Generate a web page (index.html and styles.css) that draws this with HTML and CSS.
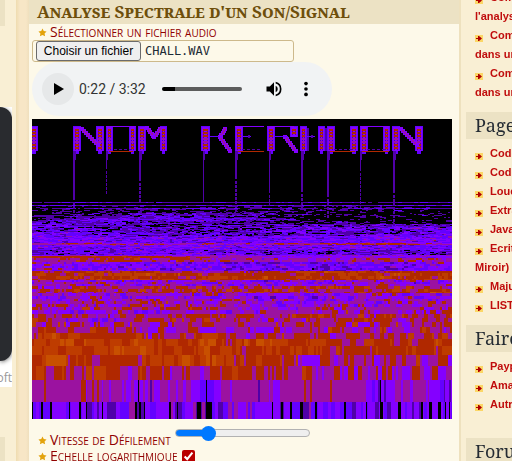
FILE: index.html
```html
<!DOCTYPE html>
<html lang="fr">
<head>
<meta charset="utf-8">
<title>Analyse Spectrale d'un Son/Signal</title>
<link rel="stylesheet" href="styles.css">
</head>
<body>
<svg class="defs" aria-hidden="true">
  <symbol id="star" viewBox="0 0 10 10"><path d="M5 .6 6.4 3.4 9.5 3.8 7.3 6 7.9 9.2 5 7.8 2.1 9.2 2.7 6 .5 3.8 3.6 3.4Z"/></symbol>
  <symbol id="plus" viewBox="0 0 8 7"><path fill="#fbd666" d="M0 0h8v7H0z"/><path fill="#b00000" d="M1 3h2V1h1l3 2.500L4 6H3V4H1z"/></symbol>
</svg>
<div class="page">
  <div class="left">
    <div class="tab"></div>
    <div class="promo"><div class="promo-art"></div><div class="promo-text"><span>Microsoft</span></div></div>
    <div class="tab"></div>
  </div>
  <div class="gutter"></div>
  <main class="main">
    <h1>Analyse Spectrale d'un Son/Signal</h1>
    <div class="content">
      <div class="label"><svg class="star"><use href="#star"/></svg><span>Sélectionner un fichier audio</span></div>
      <div class="file"><button type="button">Choisir un fichier</button><output>CHALL.WAV</output></div>
      <div class="player">
        <button type="button" class="play" aria-label="Lecture"><svg viewBox="0 0 32 32"><path d="M12 10v12l10-6z"/></svg></button>
        <span class="time">0:22 / 3:32</span>
        <input type="range" class="seek" min="0" max="212" value="34" aria-label="Position">
        <button type="button" class="icon" aria-label="Volume"><svg viewBox="0 0 24 24"><path d="M3 9v6h4l5 5V4L7 9zm13.500 3A4.500 4.500 0 0 0 14 7.970v8.050A4.470 4.470 0 0 0 16.500 12zM14 3.230v2.060a7 7 0 0 1 0 13.420v2.060a9 9 0 0 0 0-17.540z"/></svg></button>
        <button type="button" class="icon" aria-label="Options"><svg viewBox="0 0 24 24"><circle cx="12" cy="5.500" r="2.200"/><circle cx="12" cy="12" r="2.200"/><circle cx="12" cy="18.500" r="2.200"/></svg></button>
      </div>
      <canvas id="spectrum" width="420" height="300"></canvas>
      <div class="speed"><label class="label" for="speed"><svg class="star"><use href="#star"/></svg><span>Vitesse de Défilement</span></label><input id="speed" type="range" min="0" max="100" value="21"></div>
      <div class="scale"><label class="label" for="log"><svg class="star"><use href="#star"/></svg><span>Echelle logarithmique</span></label><input id="log" type="checkbox" checked></div>
    </div>
  </main>
  <aside class="side">
    <ul class="first">
      <li><a href="#"><svg><use href="#plus"/></svg>Comment faire</a></li><li><a href="#">l'analyse</a></li>
      <li><a href="#"><svg><use href="#plus"/></svg>Comment</a></li><li><a href="#">dans une</a></li>
      <li><a href="#"><svg><use href="#plus"/></svg>Comment</a></li><li><a href="#">dans une</a></li>
    </ul>
    <h2>Pages</h2>
    <ul>
      <li><a href="#"><svg><use href="#plus"/></svg>Code</a></li>
      <li><a href="#"><svg><use href="#plus"/></svg>Code</a></li>
      <li><a href="#"><svg><use href="#plus"/></svg>Louer</a></li>
      <li><a href="#"><svg><use href="#plus"/></svg>Extra</a></li>
      <li><a href="#"><svg><use href="#plus"/></svg>Java</a></li>
      <li><a href="#"><svg><use href="#plus"/></svg>Ecriture</a></li>
      <li><a href="#">Miroir)</a></li>
      <li><a href="#"><svg><use href="#plus"/></svg>Majuscule</a></li>
      <li><a href="#"><svg><use href="#plus"/></svg>LISTE</a></li>
    </ul>
    <h2>Faire</h2>
    <ul class="last">
      <li><a href="#"><svg><use href="#plus"/></svg>Paypal</a></li>
      <li><a href="#"><svg><use href="#plus"/></svg>Amazon</a></li>
      <li><a href="#"><svg><use href="#plus"/></svg>Autre</a></li>
    </ul>
    <h2>Forum</h2>
  </aside>
</div>
<script src="spectrum.js"></script>
</body>
</html>
```
FILE: styles.css
```css
* { box-sizing: border-box; }
body { margin: 0; overflow: hidden; background: #f9eed3; font-family: "Open Sans", sans-serif; }
button { font: inherit; padding: 0; cursor: pointer; }
.defs { display: none; }
.page { display: flex; height: 100vh; overflow: hidden; }

.left { flex: 0 0 16px; background: #f9efd4; }
.tab { width: 5px; height: 26px; background: #ece2c4; }
.promo { width: 12px; height: 280px; margin: 81px 0 50px; background: #fff; overflow: hidden; }
.promo-art { height: 254px; background: #292b2f; border-radius: 0 12px 12px 0; box-shadow: 0 1px 4px #777; }
.promo-text { display: flex; justify-content: flex-end; font-size: 12px; line-height: 34px; color: #999; }

.gutter { flex: 0 0 13px; background: linear-gradient(90deg, #efdcb0, #f7e6c6 4px, #f7e6c6 10px, #efdfbd); }

.main { flex: 1 1 0; min-width: 0; background: #fdf9e9; }
h1 { margin: 0; height: 24px; padding-left: 8px; background: #ece2c4; color: #6e4f0c; font: bold 17px/24px "Noto Serif", "DejaVu Serif Condensed", "DejaVu Serif", serif; font-variant: small-caps; white-space: nowrap; }
.content { padding: 0 7px 0 3px; }
.label { display: flex; align-items: center; height: 16px; padding-left: 6px; color: #900000; font-size: 14px; line-height: 16px; font-variant: small-caps; white-space: nowrap; }
.star { width: 9px; height: 9px; margin-right: 3px; fill: #e3a30c; }

.file { display: flex; align-items: center; width: 262px; height: 22px; padding-left: 3px; border: 1px solid #cdb98b; border-radius: 3px; }
.file button { width: 105px; height: 20px; border: 1px solid #6b6b6b; border-radius: 3px; background: #efefef; color: #000; font: 12px/18px "Liberation Sans", sans-serif; }
.file output { margin-left: 4px; color: #1d2b36; font: 12px/18px "DejaVu Sans Mono", monospace; }

.player { display: flex; align-items: center; width: 300px; height: 54px; margin-bottom: 3px; padding: 0 10px; border-radius: 27px; background: #f1f3f4; }
.play { width: 32px; height: 32px; border: 0; border-radius: 50%; background: #e6e8e9; }
.play svg { display: block; width: 32px; height: 32px; }
.time { width: 83px; padding-left: 5px; color: #333; font: 14px/20px Roboto, sans-serif; white-space: nowrap; }
.seek { appearance: none; width: 80px; height: 4px; margin: 0 16px 0 5px; border-radius: 2px; background: linear-gradient(90deg, #000 13px, #5c5c5c 13px); }
.seek::-webkit-slider-thumb { appearance: none; width: 0; height: 0; }
.icon { width: 32px; height: 32px; padding: 6px; border: 0; background: none; }
.icon svg { display: block; width: 20px; height: 20px; }

canvas { display: block; width: 100%; height: 300px; background: #000; }

.speed { display: flex; align-items: flex-start; padding-top: 6px; }
.speed .label { padding-top: 7px; height: 23px; }
.speed input { appearance: none; width: 135px; height: 8px; margin: 4px 0 0 4px; border: 1px solid #b2b2b2; border-radius: 4px; background: linear-gradient(90deg, #0078ff 30px, #efefef 30px); }
.speed input::-webkit-slider-thumb { appearance: none; width: 15px; height: 15px; border-radius: 50%; background: #0078ff; }
.scale { display: flex; align-items: center; }
.scale input { width: 13px; height: 13px; margin: 0 0 0 4px; accent-color: #b90000; }

.side { flex: 0 0 53px; overflow: hidden; padding-left: 5px; border-left: 2px solid #eee1be; background: #f9efd4; }
.side h2 { margin: 10px 0 5px; height: 27px; padding-left: 9px; background: #ece2c4; color: #242b33; font: 18px/27px "Noto Serif", "DejaVu Serif Condensed", "DejaVu Serif", serif; white-space: nowrap; }
.side ul { margin: 0; padding: 0 0 0 9px; list-style: none; }
.side .first { margin-top: -12px; }
.side .last { padding-bottom: 14px; }
.side li { height: 19px; font: bold 11px/19px "Liberation Sans", sans-serif; white-space: nowrap; }
.side a { color: #c00d0d; text-decoration: none; }
.side svg { width: 8px; height: 7px; margin-right: 7px; vertical-align: -3px; }
```
FILE: spectrum.js
```js
const ctx = document.getElementById("spectrum").getContext("2d");
const palette = ["#000", "#5000a8", "#6400ff", "#8400ff", "#9b12a0", "#b02800", "#be3c00", "#c85000", "#d26400"];
let seed = 7219;
function rnd() {
  seed = (seed * 1664525 + 1013904223) >>> 0;
  return seed / 4294967296;
}
function box(x, y, w, h, level) {
  ctx.fillStyle = palette[level];
  ctx.fillRect(x, y, w, h);
}
ctx.fillStyle = "#000";
ctx.fillRect(0, 0, 420, 300);

// Frequency bands: top, bottom, row height, levels spread from left to right, variation
const bands = [
  [83, 84, 1, [1.2], 1], [86, 87, 1, [1.7], 0.8], [87, 89, 1, [0.1], 1.2], [89, 90, 1, [1.1], 1.4],
  [90, 94, 1, [0.1, 0.4, 0.2, 0, 0], 1.3],
  [94, 99, 1, [0.1, 0.9, 1.4, 0.9, 0, -0.2, -0.1], 1.6],
  [99, 102, 1, [0.4, 2, 1.9, 1.6, 0, -0.2, 0], 1.5],
  [102, 105, 1, [0.9, 1.2, 1, 0.5, 0.1, -0.1], 1.6],
  [105, 108, 1, [1.9, 1.4, 0.6, 1, 1.3, 1.2, 1.1], 1.5],
  [108, 113, 1, [1.5, 1.4, 0.9, 1.7, 1.8, 2], 1.9],
  [113, 117, 1, [2, 1.7, 1.2, 1.3, 2.1], 1.9], [117, 124, 1, [2.4, 2.3, 2.1, 2.4, 2.7], 1.6],
  [124, 126, 1, [4.2, 4, 3.5, 3.8, 4.5, 4.6, 4], 1.4],
  [126, 131, 1, [2.3, 2.6, 2.3], 1.6], [131, 136, 1, [1.4, 2, 2.1, 1.5, 1.3, 1.6], 1.9],
  [136, 137, 1, [3], 1], [137, 139, 1, [5.2, 5.2, 5, 3.6, 3.2, 3, 3], 0.7],
  [139, 143, 2, [3.6, 4.7, 4.5, 4, 3.6, 4.5, 3.8], 1.3],
  [143, 152, 2, [3.1, 3, 2.5, 2.3, 1.9, 2.5, 3], 1.7],
  [152, 154, 2, [5, 5.2, 4, 5.4, 4.8], 1.2], [154, 161, 3, [5.1, 5.2, 5.3, 5.4, 5.2, 5.4, 5.5], 1.4],
  [161, 167, 2, [3.6, 3.3, 3.6], 1.8], [167, 174, 3, [4.5, 4.5, 4.7, 4.7, 4.7, 5], 1.7],
  [174, 182, 3, [3.5, 3.5, 3.8, 3, 3.1, 3], 1.8], [182, 191, 3, [4, 4, 4.2, 3.5, 3.8, 4.1], 1.7],
  [191, 195, 4, [3.5, 3.6, 3.8, 4.1], 1.6], [195, 203, 4, [4.9, 4, 4.8, 4.5, 4.4, 4.6, 4.3], 1.6],
  [203, 208, 5, [4.5, 4.2, 4.4], 1.7], [208, 214, 6, [4.1, 3.9, 4.2], 1.7],
  [214, 220, 6, [5, 4.7, 4.6], 1.6], [220, 227, 7, [5.7, 5.9, 5.3, 5.4, 5.2, 5.1, 5.6], 1.5],
  [227, 236, 9, [5.8, 6, 5.4, 5.3, 4.9, 5, 5.5], 1.4],
  [236, 247, 11, [5.5, 5.5, 5.3, 5, 4.6, 4.1, 4.7], 1.5],
  [247, 261, 14, [5, 5, 4.4, 4.7, 4.4, 3.8, 4], 1.5]
];
for (const [top, bottom, step, levels, spread] of bands) {
  for (let y = top; y < bottom; y += step) {
    const height = Math.min(step, bottom - y);
    let drift = 0;
    let hold = 0;
    let jitter = 0;
    for (let x = 0; x < 420; x += 2) {
      const p = x / 420 * (levels.length - 1);
      const i = Math.floor(p);
      const mean = levels[i] + ((levels[i + 1] ?? levels[i]) - levels[i]) * (p - i);
      drift = drift * 0.92 + (rnd() - 0.5) * 0.35;
      if (hold-- <= 0) {
        jitter = (rnd() + rnd() - 1) * spread;
        hold = Math.floor(rnd() * 3);
      }
      const level = Math.round(mean + drift + jitter);
      box(x, y, 2, height, Math.max(0, Math.min(7, level)));
    }
  }
}

// Low frequency bands, as runs over a plain base
box(0, 261, 420, 22, 4);
[[12,2,5],[49,5,5],[54,1,3],[60,2,5],[65,2,5],[70,1,3],[77,2,3],[90,2,3],[94,5,3],[102,4,3],[106,1,0],[108,3,3],[113,3,3],[118,2,1],
 [122,6,3],[136,2,3],[144,2,3],[151,3,3],[159,9,3],[168,14,2],[174,1,0],[182,7,3],[198,2,3],[226,2,1],[237,1,3],[241,7,3],[272,2,5],[278,2,5],
 [298,2,5],[334,29,3],[340,3,2],[346,2,1],[348,1,0],[352,2,1],[369,2,3],[378,3,3],[394,2,3],[397,23,3],[408,4,2],[412,1,1],[417,2,1]]
  .forEach(([x, w, level]) => box(x, 261, w, 22, level));
for (let x = 0; x < 420;) {
  const w = 2 + Math.floor(rnd() * 5);
  const r = rnd();
  box(x, 283, w, 17, r < 0.14 ? 1 : r < 0.42 ? 2 : r < 0.85 ? 3 : 4);
  x += w;
}
[[0,1],[9,2],[18,2],[37,1],[47,2],[54,1],[70,1],[103,2],[107,2],[112,1],[137,2],[145,1],[165,4],[174,6],[240,1],[249,2],[258,2],[268,3],[283,2],[312,2],[334,1],[348,3],[366,3],[389,2],[397,3],[406,3],[413,1],[417,1]]
  .forEach(([x, w]) => box(x, 283, w, 17, 0));

// Tone bursts in the upper range
function burst(x, w, h = 25) {
  box(x, 7, w, h, 2);
  box(x + 1, 8, w - 2, h - 1, 3);
  for (let y = 10; y < 5 + h; y += 3) {
    box(x + 2, y, w - 4, 2, (y > 9 && y < 17) || y > 24 ? 5 : 4);
    box(x + 2, y + 2, 1, 1, 1);
    box(x + w - 3, y + 2, 1, 1, 1);
  }
  if (h === 25) box(x + 2, 32, w - 4, 3, 2);
}
function sweep(x0, y0, x1, y1) {
  const count = Math.max(Math.abs(x1 - x0), Math.abs(y1 - y0));
  for (let i = 0; i <= count; i += 2) {
    const x = Math.round(x0 + (x1 - x0) * i / count);
    const y = Math.round(y0 + (y1 - y0) * i / count);
    box(x - 1, y - 2, 4, 4, 3);
  }
  for (let i = 2; i < count; i += 2) {
    box(Math.round(x0 + (x1 - x0) * i / count), Math.round(y0 + (y1 - y0) * i / count) - 1, 2, 2, 4);
  }
}
box(275, 9, 2, 23, 1);
box(292, 9, 4, 23, 1);
[[-2,8],[41,8],[64,8],[74,7],[97,7],[106,8],[128,7],[169,9],[203,8],[235,8],[268,7],[286,7],[295,8],[318,8],[328,8],[351,7],[360,8],[383,8]].forEach(([x, w]) => burst(x, w));
burst(258, 8, 11);
sweep(49, 10, 65, 26);
sweep(114, 9, 121, 18);
sweep(121, 18, 128, 9);
sweep(187, 18, 193, 9);
sweep(187, 18, 197, 32);
sweep(252, 18, 263, 32);
sweep(368, 10, 384, 26);
[[74,104],[203,232],[235,262],[328,357]].forEach(([a, b]) => box(a, 7, b - a, 1, 3));
[[77,101],[205,232],[297,323],[330,357]].forEach(([a, b]) => {
  box(a, 32, b - a, 1, 5);
  for (let x = a + 5; x < b - 3; x += 5) box(x, 30, 3, 1, 1);
});
[[178,187],[211,219],[243,256],[275,283]].forEach(([a, b]) => box(a, 17, b - a, 1, 2));
box(216, 16, 2, 3, 1);
box(279, 16, 2, 3, 1);

// Decay trails: x, width, end of the solid part, end of the dotted part
[[41,2,81,96],[74,1,50,75],[107,2,62,83],[171,1,83,83],[203,2,60,95],[237,1,74,88],[269,2,73,90],[295,2,78,97],[328,1,52,88],[361,2,74,107]].forEach(([x, w, solid, end]) => {
  box(x, 32, w, solid - 32, 1);
  box(x, 32, w + 1, 9, 1);
  for (let y = solid + 2; y < end; y += 4) box(x, y, w, 3, 1);
});
```
